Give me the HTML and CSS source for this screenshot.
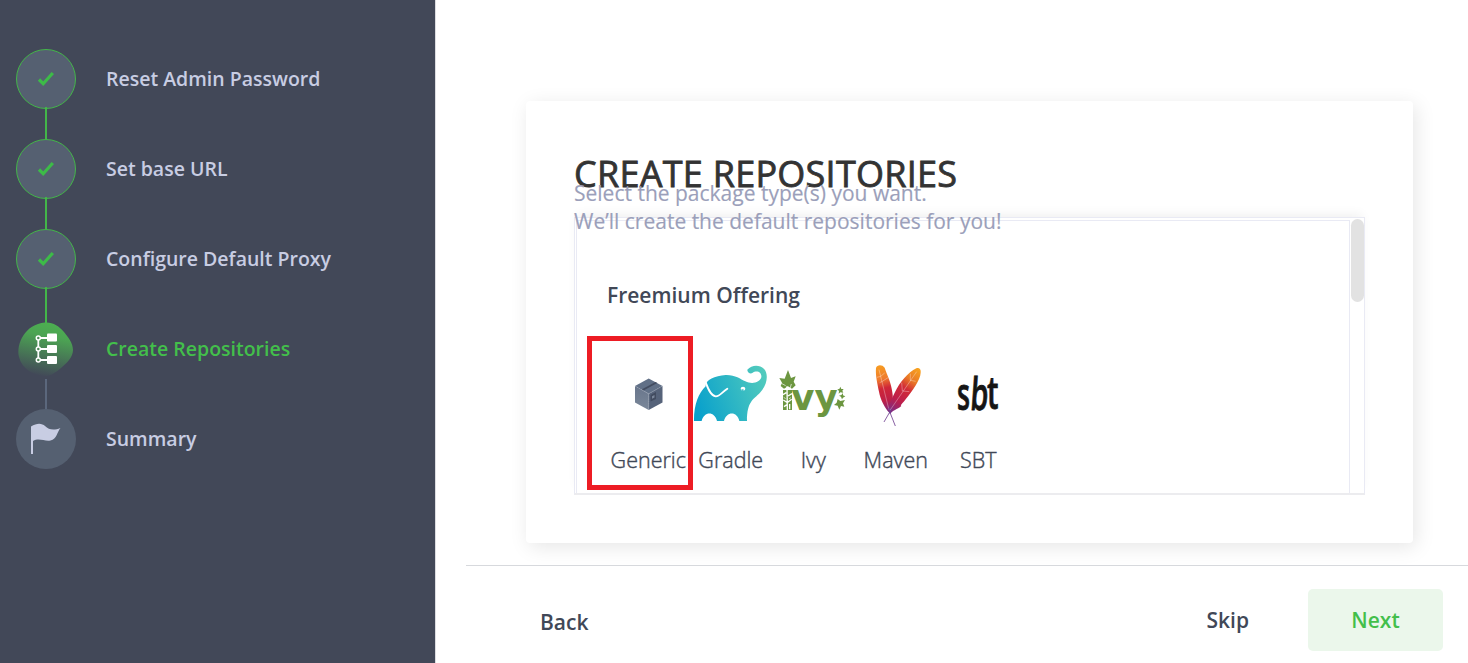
FILE: index.html
```
<!DOCTYPE html>
<html lang="en">
<head>
<meta charset="utf-8">
<title>Create Repositories</title>
<link rel="stylesheet" href="styles.css">
</head>
<body>
<div class="app">
  <aside class="sidebar">
    <ol class="steps">
      <li class="step done"><span class="dot"><svg width="18" height="16" viewBox="0 0 18 16"><path d="M2 8.500l4.200 4.200L15.800 2"/></svg></span><span class="label">Reset Admin Password</span></li>
      <li class="step done"><span class="dot"><svg width="18" height="16" viewBox="0 0 18 16"><path d="M2 8.500l4.200 4.200L15.800 2"/></svg></span><span class="label">Set base URL</span></li>
      <li class="step done"><span class="dot"><svg width="18" height="16" viewBox="0 0 18 16"><path d="M2 8.500l4.200 4.200L15.800 2"/></svg></span><span class="label">Configure Default Proxy</span></li>
      <li class="step active"><span class="dot">
        <svg width="60" height="60" viewBox="0 0 60 60">
          <defs><linearGradient id="blob" x1=".6" y1="0" x2=".4" y2="1"><stop offset="0" stop-color="#4caf50"/><stop offset=".25" stop-color="#4ca453"/><stop offset="1" stop-color="#424858"/></linearGradient></defs>
          <path fill="url(#blob)" d="M29 3.500C37 3 43 7 48 13C52 18 57 24 57 31C57 38 51 44 45 49C39 54 34 57.500 28 57C17 56 6 50 3 38C0 25 9 5 29 3.500Z"/>
          <g fill="none" stroke="#fff" stroke-width="1.800"><path d="M22.300 19V41M22.300 19H32M22.300 30H32M22.300 41H32"/><g fill="#4c8a56" stroke-width="1.500"><circle cx="22.300" cy="19" r="2"/><circle cx="22.300" cy="30" r="2"/><circle cx="22.300" cy="41" r="2"/></g></g>
          <g fill="#fff"><rect x="31" y="14.500" width="10" height="8" rx="1"/><rect x="31" y="26" width="10" height="8" rx="1"/><rect x="31" y="37" width="10" height="8" rx="1"/></g>
        </svg></span><span class="label">Create Repositories</span></li>
      <li class="step"><span class="dot flag"><svg width="32" height="34" viewBox="0 0 32 34"><path fill="#c8cde3" d="M1 4.500C7 .5 12 1 15 4C19 8 24 8.500 30.500 6C27 10 27 17 20.500 18.500C15 19.800 9 15.500 3 19V32H1Z"/></svg></span><span class="label">Summary</span></li>
    </ol>
  </aside>
  <main class="main">
    <section class="card">
      <h1 class="title">CREATE REPOSITORIES</h1>
      <p class="lead">Select the package type(s) you want.<br>We’ll create the default repositories for you!</p>
      <div class="picker">
        <div class="pane">
          <h2 class="group">Freemium Offering</h2>
          <div class="tiles">
            <div class="tile">
              <svg viewBox="0 0 82.5 80">
                <defs><linearGradient id="side" x2="0" y2="1"><stop stop-color="#69768c"/><stop offset="1" stop-color="#7a8799"/></linearGradient></defs>
                <path fill="#617087" d="M41.700 28.500L55.500 36L41.700 43.800L28 36Z"/>
                <path fill="url(#side)" d="M28 36L41.700 43.800V60L28 52.500Z"/><path fill="#56637a" d="M55.500 36L41.700 43.800V60L55.500 52.500Z"/>
                <path fill="#434c60" d="M35 39.300L48.500 32L50.300 33L36.500 40.500Z"/><path fill="#424c60" d="M43.500 45L49 42V49L43.500 51.500Z"/><path fill="#7a869a" d="M45 46.200L47.500 45V47.500L45 48.800Z"/>
                <path fill="none" stroke="#9da7b7" stroke-width=".5" stroke-dasharray="1.500 .8" d="M28 36L41.700 43.800L55.500 36M41.700 43.800V60"/>
              </svg>
              <span class="name">Generic</span></div>
            <div class="tile">
              <svg viewBox="0 0 82.5 80">
                <defs><linearGradient id="teal" gradientUnits="userSpaceOnUse" x1="27" y1="150" x2="246" y2="70"><stop stop-color="#08a0cc"/><stop offset="1" stop-color="#52cbbd"/></linearGradient></defs>
                <g transform="translate(-5 5) scale(.3333)">
                  <path fill="url(#teal)" d="M27 198C26 153 40 114 62 94C60 76 88 62 122 60C150 59 166 72 181 79C202 89 225 82 229 67C231 52 216 44 202 54C196 58 186 52 187 44C201 29 225 29 238 43C251 58 247 90 225 113C206 133 186 138 186 198H163C157 168 124 168 117 198H96C89 168 57 168 50 198Z"/>
                  <path fill="none" stroke="#fff" stroke-width="5.500" stroke-linecap="round" d="M62 82C69 101 77 122 92 124C104 125 110 112 127 101"/>
                  <ellipse cx="174" cy="101" rx="7" ry="5.500" fill="#fff"/><path fill="#35b7c3" d="M168 104Q172 101 177 104L173 108Z"/>
                </g>
              </svg>
              <span class="name">Gradle</span></div>
            <div class="tile">
              <svg viewBox="0 0 82.5 80">
                <g fill="#6c9640" transform="translate(-2 0) scale(.3333)">
                  <path d="M54 60L63 84L77 79L71 95L77 106L66 116L54 109L42 116L32 108L36 98L28 84L44 86Z"/>
                  <rect x="39" y="120" width="27" height="60"/>
                  <text class="ivy" x="64" y="180" textLength="139" lengthAdjust="spacingAndGlyphs">vy</text>
                  <path d="M211 110L214 117L221 117L217 122L220 128L211 127L206 131L207 123L202 118L208 117Z"/>
                  <path d="M219 129L219 136L226 139L219 143L216 148L213 140L207 137L214 135Z"/>
                  <path d="M203 147L211 153L225 150L219 160L223 170L213 168L208 179L203 167L192 165L200 158Z"/>
                </g>
                <g fill="none" stroke="#fff" transform="translate(-2 0) scale(.3333)"><path stroke-width="4" d="M51 109L52 180M39 134L49 128M40 150L51 157M54 138L66 131M53 157L65 148M42 170L51 164M59 178V162"/><path stroke-width="2" d="M34 100L47 107M64 102L60 116M41 142L47 146M57 146L63 143"/></g>
              </svg>
              <span class="name">Ivy</span></div>
            <div class="tile">
              <svg viewBox="0 0 82.5 80">
                <defs><linearGradient id="feather" gradientUnits="userSpaceOnUse" x1="70" y1="48" x2="103" y2="190"><stop stop-color="#f69923"/><stop offset=".25" stop-color="#ef7b2d"/><stop offset=".45" stop-color="#cf2638"/><stop offset=".7" stop-color="#be2047"/><stop offset="1" stop-color="#6d2a8c"/></linearGradient>
                <linearGradient id="feather2" gradientUnits="userSpaceOnUse" x1="176" y1="57" x2="85" y2="190"><stop stop-color="#f8a21f"/><stop offset=".25" stop-color="#e97826"/><stop offset=".43" stop-color="#d22c36"/><stop offset=".7" stop-color="#bd1e4c"/><stop offset="1" stop-color="#70308f"/></linearGradient></defs>
                <g transform="translate(5 0) scale(.3333)">
                  <path fill="url(#feather)" d="M48 54C51 43 67 43 74 53C81 75 93 95 97 127C101 152 98 176 88 188C75 175 61 149 57 125C52 101 46 75 48 54Z"/>
                  <path fill="url(#feather2)" d="M169 55C177 52 184 58 182 68C181 90 158 122 137 148C128 161 119 166 124 168C112 179 97 180 90 193C82 178 91 155 104 128C120 96 144 67 169 55Z"/>
                  <g fill="none" stroke="#fff" stroke-width="1.500" opacity=".65"><path d="M57 59L87 180M51 82L62 79L74 69M59 98L67 94L84 83M170 65L90 181M151 71L151 91L167 94M125 98L127 123L148 125"/></g>
                  <path fill="none" stroke="#704090" stroke-width="2.500" d="M85 175L106 228M94 178L72 216"/>
                </g>
              </svg>
              <span class="name">Maven</span></div>
            <div class="tile">
              <svg viewBox="0 0 82.5 80">
                <g class="sbt"><text x="20" y="59.500" textLength="13" lengthAdjust="spacingAndGlyphs">s</text><text transform="translate(32.500 60) skewX(-4)" textLength="18" lengthAdjust="spacingAndGlyphs">b</text><text x="50" y="59" textLength="11.500" lengthAdjust="spacingAndGlyphs">t</text></g>
              </svg>
              <span class="name">SBT</span></div>
          </div>
          <div class="highlight"></div>
        </div>
        <div class="track"><div class="thumb"></div></div>
      </div>
    </section>
    <footer class="footer">
      <button class="btn back">Back</button>
      <button class="btn skip">Skip</button>
      <button class="btn next">Next</button>
    </footer>
  </main>
</div>
</body>
</html>
```
FILE: styles.css
```
* { box-sizing: border-box; }
body { margin: 0; font-family: "Open Sans", "Noto Sans", sans-serif; background: #fff; color: #414857; }
.app { display: flex; height: 663px; overflow: hidden; }
.sidebar { width: 436px; flex: none; padding: 49px 16px 0; background: #424858; border-right: 1px solid #dcdce0; }
.steps { list-style: none; margin: 0; padding: 0; display: flex; flex-direction: column; gap: 30px; }
.step { position: relative; display: flex; align-items: center; gap: 30px; height: 60px; color: #c8cde3; }
.dot { width: 60px; height: 60px; flex: none; border-radius: 50%; background: #556071; display: flex; align-items: center; justify-content: center; }
.dot.flag { padding-right: 1px; }
.step.done .dot { border: 1px solid #43b649; }
.step.done path { fill: none; stroke: #3dbb48; stroke-width: 3.2; }
.step.active { color: #43bf4b; }
.step.active .dot { background: none; }
.step:not(:last-child)::after { content: ""; position: absolute; left: 29px; top: 58px; width: 2px; height: 33px; background: #43b649; }
.step:nth-child(3)::after { height: 36px; }
.step.active::after { background: #5b677c; top: 60px; height: 30px; }
.label { font-size: 19.5px; font-weight: 600; line-height: 28px; white-space: nowrap; }

.main { flex: 1; min-width: 0; display: flex; flex-direction: column; }
.card { width: 887px; height: 442px; margin: 101px 0 0 90px; padding: 49px 48px 0; border-radius: 4px; background: #fff; box-shadow: 3px 4px 20px rgba(0, 0, 0, .1); }
.title { margin: 0; font-size: 36px; line-height: 48px; font-weight: 500; letter-spacing: .26px; color: #333; white-space: nowrap; -webkit-text-stroke: .8px #333; }
.lead { position: relative; z-index: 1; margin: -19px 0 0; font-size: 21px; line-height: 28px; color: #9b9fba; white-space: nowrap; -webkit-text-stroke: .15px #9b9fba; }
.picker { display: flex; width: 791px; height: 278px; margin-top: -18px; padding: 2px 0 0 2px; border: 1px solid #e9eaf4; border-bottom: 2px solid #ececef; background: #fff; box-shadow: 0 -6px 10px -3px rgba(0, 0, 0, .06); }
.pane { position: relative; flex: none; width: 774px; margin-left: -1px; padding: 58px 30px 0; border: 1px solid #e9eaf4; border-bottom: 0; }
.group { margin: 0; font-size: 21px; line-height: 32px; font-weight: 600; white-space: nowrap; }
.tiles { display: flex; margin-top: 39px; }
.tile { flex: none; width: 82.5px; display: flex; flex-direction: column; align-items: center; }
.tile svg { display: block; width: 82.5px; height: 80px; }
.name { margin-top: 15px; font-size: 21.5px; line-height: 30px; font-weight: 300; white-space: nowrap; color: #414857; -webkit-text-stroke: .4px #414857; }
.ivy { font: bold 106px "DejaVu Sans", sans-serif; }
.sbt { font: 600 45px "Open Sans", sans-serif; fill: #151515; stroke: #151515; stroke-width: .8px; }
.highlight { position: absolute; left: 10px; top: 115px; width: 106px; height: 154px; border: 5px solid #ed1c24; }
.track { flex: none; width: 14px; padding-left: 1px; margin-top: -1px; }
.thumb { width: 13px; height: 83px; border-radius: 7px; background: #e2e2e2; }
.footer { display: flex; align-items: center; height: 98px; margin: 22px 0 0 30px; padding: 10px 25px 0 74px; border-top: 1px solid #d7d9dd; }
.btn { border: 0; background: none; padding: 0; font: 600 21px/30px "Open Sans", sans-serif; color: #414857; }
.back { margin-top: 4px; }
.skip { margin-left: auto; }
.next { width: 135px; height: 62px; margin-left: 59px; border-radius: 5px; background: #ebf7eb; color: #43bf4b; }
```
